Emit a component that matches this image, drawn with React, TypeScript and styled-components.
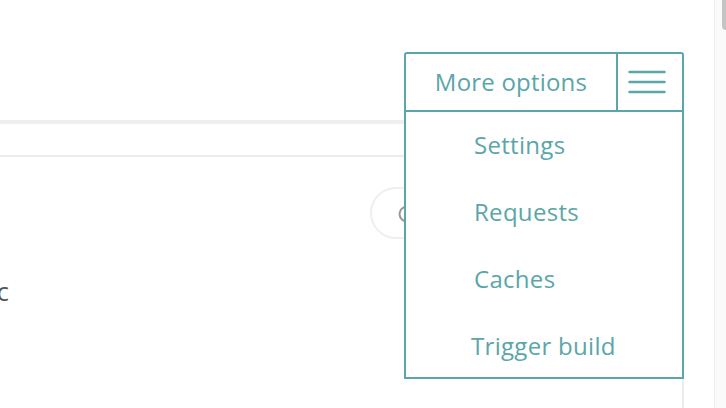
import React from "react";
import styled, { createGlobalStyle } from "styled-components";

const teal = "#5aa6a8";

const Global = createGlobalStyle`
  html, body { margin: 0; padding: 0; background: #fff; }
  body { font-family: "Open Sans", "Liberation Sans", sans-serif; overflow: hidden; }
  * { box-sizing: border-box; }
`;

const Page = styled.div`
  display: flex;
  width: 726px;
  height: 408px;
  overflow: hidden;
`;

const Main = styled.div`
  position: relative;
  flex: 1;
  display: flex;
  flex-direction: column;
`;

const TopSpace = styled.div`
  height: 120px;
  flex: none;
`;

const Card = styled.section`
  width: 684px;
  flex: 1;
  border-top: 4px solid #efefef;
  border-right: 2px solid #ececec;
  display: flex;
  flex-direction: column;
`;

const CardHeader = styled.div`
  height: 33px;
  border-bottom: 2px solid #ececec;
`;

const CardBody = styled.div`
  display: flex;
  flex-direction: column;
  padding-top: 30px;
`;

const ActionRow = styled.div`
  display: flex;
  padding-left: 370px;
`;

const Pill = styled.button`
  height: 52px;
  width: 160px;
  border: 2px solid #efefef;
  border-radius: 26px;
  background: #fff;
  display: flex;
  align-items: center;
  padding: 0 0 0 26px;
  color: #999;
  font: inherit;
`;

const ClipRow = styled.div`
  margin-top: 35px;
  width: 9px;
  overflow: hidden;
  display: flex;
  justify-content: flex-end;
`;

const Word = styled.span`
  color: #555;
  font-size: 26px;
  line-height: 34px;
  white-space: nowrap;
`;

const Menu = styled.div`
  position: absolute;
  left: 404px;
  top: 52px;
  width: 280px;
  height: 327px;
  border: 2px solid ${teal};
  border-radius: 3px 3px 0 0;
  background: #fff;
  display: flex;
  flex-direction: column;
`;

const MenuHead = styled.div`
  display: flex;
  height: 58px;
  flex: none;
  border-bottom: 2px solid ${teal};
`;

const HeadLabel = styled.div`
  flex: 1;
  display: flex;
  align-items: center;
  justify-content: center;
  border-right: 2px solid ${teal};
  color: ${teal};
  font-size: 24px;
  letter-spacing: 0.2px;
  padding-bottom: 2px;
`;

const Burger = styled.div`
  width: 64px;
  display: flex;
  align-items: center;
  padding-left: 10px;
`;

const List = styled.ul`
  list-style: none;
  margin: 0;
  padding: 0;
  display: flex;
  flex-direction: column;
`;

const Item = styled.li<{ $indent: number }>`
  flex: none;
  height: 67px;
  display: flex;
  align-items: center;
  padding-left: ${(p) => p.$indent}px;
  color: ${teal};
  font-size: 24px;
  letter-spacing: 0.3px;
  padding-bottom: 2px;
`;

const Scrollbar = styled.div`
  width: 12px;
  flex: none;
  border-left: 1px solid #ececec;
  background: #fafafa;
  display: flex;
  justify-content: flex-end;
`;

const Thumb = styled.div`
  width: 4px;
  height: 30px;
  background: #c4c4c4;
  border-radius: 0 0 0 4px;
`;

const items = [
  { label: "Settings", indent: 68 },
  { label: "Requests", indent: 68 },
  { label: "Caches", indent: 68 },
  { label: "Trigger build", indent: 65 },
];

export default function App() {
  return (
    <>
      <Global />
      <Page>
        <Main>
          <TopSpace />
          <Card>
            <CardHeader />
            <CardBody>
              <ActionRow>
                <Pill>
                  <svg width="18" height="18" viewBox="0 0 18 18" fill="none">
                    <path d="M12 3.2A7.5 7.5 0 1 0 16.5 9" stroke="#999" strokeWidth="2" />
                  </svg>
                </Pill>
              </ActionRow>
              <ClipRow>
                <Word>Public</Word>
              </ClipRow>
            </CardBody>
          </Card>
          <Menu>
            <MenuHead>
              <HeadLabel>More options</HeadLabel>
              <Burger>
                <svg width="38" height="24" viewBox="0 0 38 24" fill="none">
                  <g stroke={teal} strokeWidth="2.5" strokeLinecap="round">
                    <line x1="1.5" y1="2" x2="36.5" y2="2" />
                    <line x1="1.5" y1="12" x2="36.5" y2="12" />
                    <line x1="1.5" y1="22" x2="36.5" y2="22" />
                  </g>
                </svg>
              </Burger>
            </MenuHead>
            <List>
              {items.map((it) => (
                <Item key={it.label} $indent={it.indent}>
                  {it.label}
                </Item>
              ))}
            </List>
          </Menu>
        </Main>
        <Scrollbar>
          <Thumb />
        </Scrollbar>
      </Page>
    </>
  );
}
